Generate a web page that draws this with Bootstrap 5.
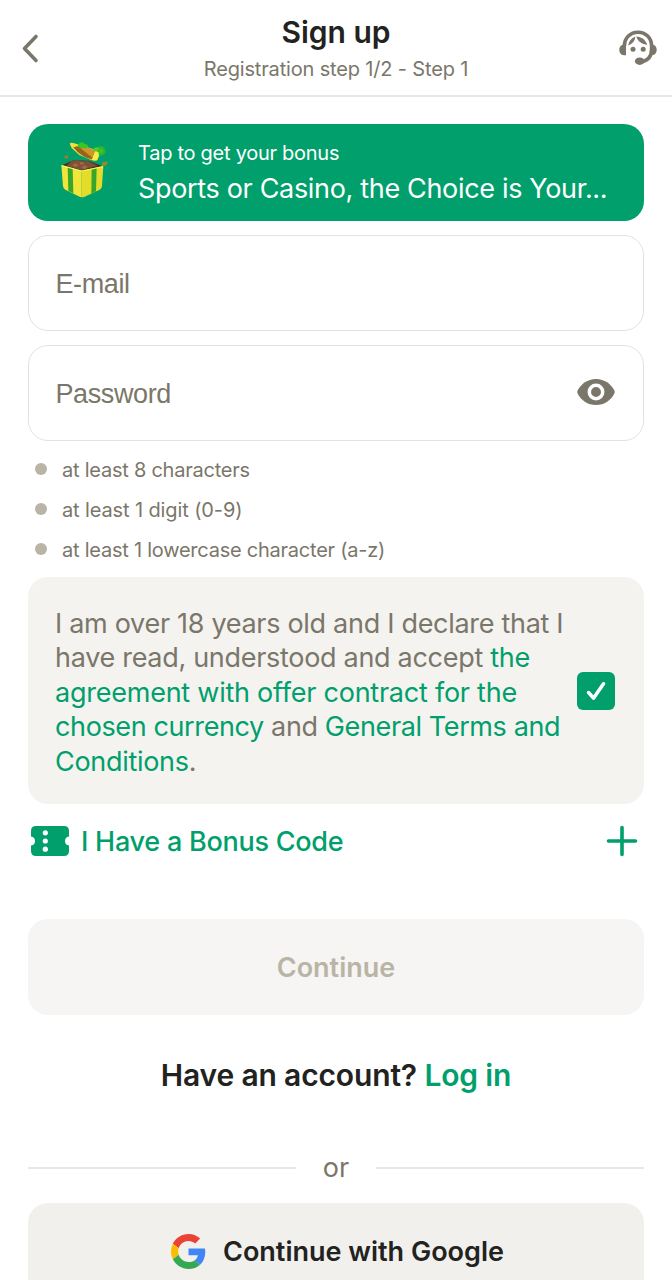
<!DOCTYPE html>
<html lang="en">
<head>
<meta charset="utf-8">
<meta name="viewport" content="width=device-width, initial-scale=1">
<title>Sign up</title>
<link href="https://cdn.jsdelivr.net/npm/bootstrap@5.3.0/dist/css/bootstrap.min.css" rel="stylesheet">
<style>
:root{--brand:#009f6b;--muted:#7b766a;--ink:#222221}
html,body{height:1280px;overflow:hidden}
body{font-family:Inter,"Liberation Sans",sans-serif;color:var(--ink);background:#fff}
svg{display:block;flex:none}
.topbar{height:97px;border-bottom:2px solid #e8e8e7;padding:0 15px}
.topbar h1{font-size:30px;line-height:36px;font-weight:600;margin:0;letter-spacing:0}
.topbar p{font-size:20px;line-height:24px;color:var(--muted);margin:7px 0 0;letter-spacing:-.16px}
.page{padding:27px 28px 0}
.round{border-radius:20px}
.bonus{height:97px;background:var(--brand);color:#fff;padding-left:32px}
.bonus svg{margin-top:-5px}
.bonus-text{margin:1px 0 0 30px}
.bonus-sub{font-size:20px;line-height:26px;letter-spacing:-.27px}
.bonus-title{font-size:27px;line-height:34px;margin-top:6px;letter-spacing:-.33px}
.field{height:96px;margin-top:14px;border:1.5px solid #e2e2e0;padding:0 28px 0 26.5px}
.field input{font-family:"Liberation Sans",Arial,sans-serif;font-size:27px;letter-spacing:-.4px;color:var(--muted);background:none;box-shadow:none!important}
.field .form-control{padding-top:2px!important}
.field input::placeholder{color:var(--muted);opacity:1}
.rules{margin:9px 0 0 7px}
.rules li{height:40px;font-size:20px;line-height:40px;color:var(--muted);letter-spacing:-.24px}
.rules li:nth-child(2){letter-spacing:-.12px}
.dot{width:12px;height:12px;background:#b9b4a5;margin:-3px 15px 0 0}
.agree{height:227px;background:#f4f3f0;margin-top:7px;padding:0 29px 0 27px}
.agree p{font-size:27px;line-height:34.5px;color:var(--muted);margin:5px 0 0;white-space:nowrap;letter-spacing:-.3px}
.agree .l3{letter-spacing:-.24px}
.agree .l4{letter-spacing:-.38px}
.green{color:var(--brand);text-decoration:none}
.code-row{height:38px;margin-top:18px;padding:0 6px 0 3px}
.code-row span{font-size:27px;font-weight:500;margin:2px 0 0 12px;letter-spacing:-.25px}
.next{height:96px;margin-top:59px;background:#f6f5f4!important;color:#b9b4a5!important;opacity:1!important;font-size:27px;font-weight:600;border:0;padding-top:8px}
.login{font-size:30px;line-height:36px;font-weight:600;margin:42px 0 0;letter-spacing:-.15px}
.or{height:36px;margin-top:57px;font-size:27px;line-height:36px;color:var(--muted)}
.or i{height:2px;width:268px;background:#e8e8e6}
.google{height:96px;margin-top:17px;background:#f1f0ed;font-size:27px;font-weight:600;border:0;color:var(--ink);padding:6px 12px 6px 15px}
.google span{margin:2px 0 0 17px}
</style>
</head>
<body>
<header class="topbar d-flex align-items-center justify-content-between">
  <svg width="38" height="40" viewBox="-7 0 38 40" fill="none" stroke="#7b766a" stroke-width="3.6" stroke-linecap="round" stroke-linejoin="round"><path d="M14 8.500 2.500 20.500 14 32.500"/></svg>
  <div class="text-center"><h1>Sign up</h1><p>Registration step 1/2 - Step 1</p></div>
  <svg width="38" height="36" viewBox="0 0 38 36"><g fill="none" stroke="#7b766a" stroke-width="3.600"><path d="M5.400 16C5.400 8 11.400 2.200 19 2.200S32.600 8 32.600 16v3c0 7.500-4 12.200-11.600 13"/></g><g fill="#7b766a"><path d="M7 14.500H5.200C2 14.500.3 17 .3 19.800S2 25.200 5 25.200h2zM31.200 14.500h1.600c3.200 0 4.900 2.500 4.900 5.300s-1.700 5.400-4.700 5.400h-1.800z"/><path d="M9.200 15.500c.8-4.200 3.500-7.700 7-8.700.1 3.700-2.800 7.400-7 8.700zM17.300 6.500c5.200.1 9.300 3.500 11 8.200-5.100-.4-9.700-3.200-11-8.200z"/><circle cx="14" cy="19.200" r="2.500"/><circle cx="24.200" cy="19.200" r="2.500"/><ellipse cx="20.700" cy="31.200" rx="4.800" ry="3.700"/></g></svg>
</header>
<main class="page">
  <section class="bonus round d-flex align-items-center">
    <svg width="48" height="56" viewBox="24 24 144 168">
      <ellipse cx="43" cy="69" rx="6.500" ry="5" fill="#8d803e"/><path d="M150 86q10-7 18 0l-6 9-12 1z" fill="#8f8b34"/>
      <path d="M30 94 64 79 110 80 152 97 89 111z" fill="#4b301c"/>
      <path d="M44 96 58 81l16-4 18 5 16-1 28 14-47 13z" fill="#7c5236"/>
      <path d="M60 94l10-6 10 5-8 6zm27 7 10-7 11 4-10 8zm-5-17 12 1 3 6-11 2z" fill="#a06a48"/>
      <path d="M28 94 89 110v80q-4 0-9-3l-40-20q-6-3-7-10z" fill="#f0e63a"/><path d="M89 110 154 97l-4 58q0 8-7 12l-45 21q-5 2-9 2z" fill="#e3dd2a"/>
      <path d="M47 99l15 4 2 75-15-7zM119 104l15-3-2 71-14 7z" fill="#37a62b"/>
      <path d="M29 95 89 111l64-13" fill="none" stroke="#fbf35f" stroke-width="3.500" stroke-linejoin="round"/>
      <path d="M53 29q3-5 11-2l68 21q10 4 12 12l-8 19q-11 2-20-2L82 63 59 42z" fill="#f2e034"/>
      <path d="M64 40 80 36 128 52 120 76Q94 70 76 53z" fill="#94631f"/><path d="M84 41 101 37 130 51 121 71z" fill="#cf942b"/>
      <path d="M77 35q3-9 13-10l20 10-8 8-20-2z" fill="#3cc626"/>
      <circle cx="147" cy="51" r="10.500" fill="#5bb52c" stroke="#1fbd2c" stroke-width="7"/>
      <path d="M122 47q7-10 20-6l-8 15z" fill="#55cb24"/>
      <path d="M130 52q7 0 11 5l-7 22q-8 1-14-2z" fill="#f7ec4a"/>
    </svg>
    <div class="bonus-text"><div class="bonus-sub">Tap to get your bonus</div><div class="bonus-title text-nowrap">Sports or Casino, the Choice is Your...</div></div>
  </section>
  <div class="field round d-flex align-items-center"><input class="form-control border-0 p-0" type="email" placeholder="E-mail"></div>
  <div class="field round d-flex align-items-center"><input class="form-control border-0 p-0" type="password" placeholder="Password">
    <svg width="38" height="28" viewBox="0 0 38 28" style="margin-top:-2px"><path d="M19 1C10.500 1 4 6 .7 12.300q-.8 1.700 0 3.400C4 22 10.500 27 19 27s15-5 18.300-11.300q.8-1.700 0-3.400C34 6 27.500 1 19 1z" fill="#7b766a"/><circle cx="19" cy="14" r="6.700" fill="#7b766a" stroke="#fff" stroke-width="3.500"/></svg>
  </div>
  <ul class="rules list-unstyled">
    <li class="d-flex align-items-center"><span class="dot rounded-circle"></span>at least 8 characters</li>
    <li class="d-flex align-items-center"><span class="dot rounded-circle"></span>at least 1 digit (0-9)</li>
    <li class="d-flex align-items-center"><span class="dot rounded-circle"></span>at least 1 lowercase character (a-z)</li>
  </ul>
  <section class="agree round d-flex align-items-center justify-content-between">
    <p>I am over 18 years old and I declare that I<br>have read, understood and accept <a class="green">the</a><br><a class="green l3">agreement with offer contract for the</a><br><span class="l4"><a class="green">chosen currency</a> and <a class="green">General Terms and</a></span><br><a class="green">Conditions</a>.</p>
    <svg width="38" height="38" viewBox="0 0 38 38"><rect width="38" height="38" rx="6" fill="#009f6b"/><path d="M11.500 20.500 16.500 26.200 26.500 11.800" fill="none" stroke="#fff" stroke-width="3.500" stroke-linecap="round" stroke-linejoin="round"/></svg>
  </section>
  <div class="code-row green d-flex align-items-center">
    <svg width="38" height="30" viewBox="0 0 38 30"><path d="M5 0h28q5 0 5 5v5.500q-4 .5-4 4.500t4 4.500V25q0 5-5 5H5q-5 0-5-5v-5.500q4-.5 4-4.500t-4-4.500V5q0-5 5-5z" fill="#009f6b"/><g fill="#fff"><circle cx="14.300" cy="6.800" r="2.600"/><circle cx="14.300" cy="15" r="2.600"/><circle cx="14.300" cy="23.200" r="2.600"/></g></svg>
    <span>I Have a Bonus Code</span>
    <svg class="ms-auto" width="32" height="32" viewBox="0 0 32 32" stroke="#009f6b" stroke-width="3.600" stroke-linecap="round"><path d="M16 2.500v27M2.500 16h27"/></svg>
  </div>
  <button class="next btn round w-100" disabled>Continue</button>
  <p class="login text-center">Have an account? <a class="green">Log in</a></p>
  <div class="or d-flex align-items-center justify-content-between"><i></i><span>or</span><i></i></div>
  <button class="google btn round w-100 d-flex align-items-center justify-content-center">
    <svg width="35" height="35" viewBox="0 0 48 48"><path fill="#EA4335" d="M24 9.500c3.540 0 6.710 1.220 9.210 3.600l6.850-6.850C35.900 2.380 30.470 0 24 0 14.620 0 6.510 5.380 2.560 13.220l7.980 6.190C12.430 13.720 17.740 9.500 24 9.500z"/><path fill="#4285F4" d="M46.980 24.550c0-1.570-.15-3.090-.38-4.550H24v9.020h12.940c-.58 2.960-2.260 5.480-4.780 7.180l7.730 6c4.510-4.180 7.090-10.360 7.090-17.650z"/><path fill="#FBBC05" d="M10.530 28.590c-.48-1.450-.76-2.990-.76-4.590s.27-3.140.76-4.590l-7.980-6.190C.92 16.460 0 20.120 0 24s.92 7.540 2.560 10.780z"/><path fill="#34A853" d="M24 48c6.480 0 11.930-2.130 15.890-5.810l-7.730-6c-2.150 1.450-4.920 2.300-8.160 2.300-6.260 0-11.570-4.220-13.470-9.910l-7.980 6.190C6.510 42.620 14.620 48 24 48z"/></svg>
    <span>Continue with Google</span>
  </button>
</main>
<script src="https://cdn.jsdelivr.net/npm/bootstrap@5.3.0/dist/js/bootstrap.bundle.min.js"></script>
</body>
</html>
